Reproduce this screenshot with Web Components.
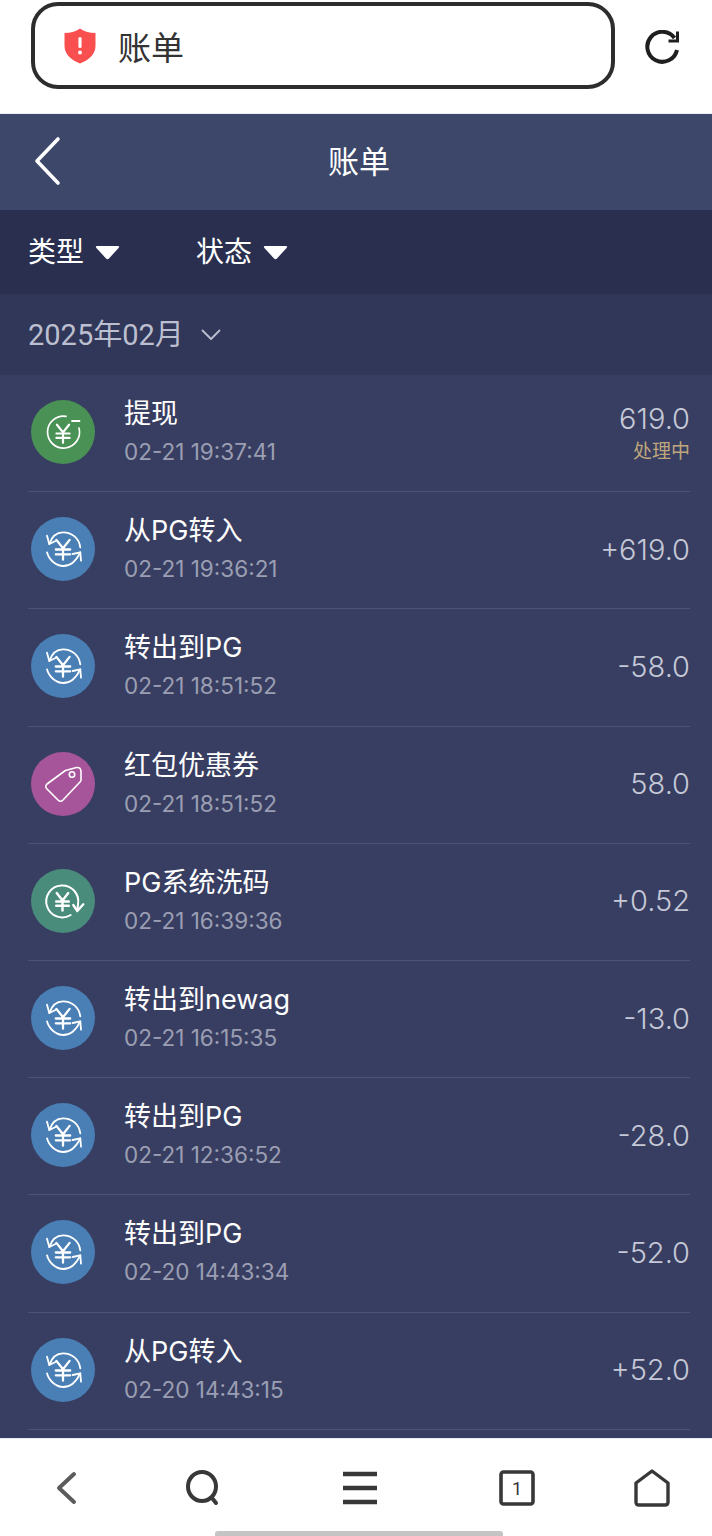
<!DOCTYPE html>
<html lang="zh">
<head>
<meta charset="utf-8">
<title>账单</title>
<style>
    html,body{margin:0;padding:0;background:#fff}
    body{font-family:Roboto,"Noto Sans CJK SC",sans-serif}
    bill-page{height:1536px}
</style>
</head>
<body>
<bill-page>
    <browser-bar slot="top">账单</browser-bar>
    <app-header slot="top">账单</app-header>
    <filter-bar slot="top">
        <filter-item>类型</filter-item>
        <filter-item>状态</filter-item>
    </filter-bar>
    <month-bar slot="top">2025年02月</month-bar>

    <bill-row icon="withdraw"><span>提现</span><span slot="time">02-21 19:37:41</span><span slot="amount">619.0</span><span slot="status">处理中</span></bill-row>
    <bill-row icon="transfer"><span>从PG转入</span><span slot="time">02-21 19:36:21</span><span slot="amount">+619.0</span></bill-row>
    <bill-row icon="transfer"><span>转出到PG</span><span slot="time">02-21 18:51:52</span><span slot="amount">-58.0</span></bill-row>
    <bill-row icon="coupon"><span>红包优惠券</span><span slot="time">02-21 18:51:52</span><span slot="amount">58.0</span></bill-row>
    <bill-row icon="rebate"><span>PG系统洗码</span><span slot="time">02-21 16:39:36</span><span slot="amount">+0.52</span></bill-row>
    <bill-row icon="transfer"><span>转出到newag</span><span slot="time">02-21 16:15:35</span><span slot="amount">-13.0</span></bill-row>
    <bill-row icon="transfer"><span>转出到PG</span><span slot="time">02-21 12:36:52</span><span slot="amount">-28.0</span></bill-row>
    <bill-row icon="transfer"><span>转出到PG</span><span slot="time">02-20 14:43:34</span><span slot="amount">-52.0</span></bill-row>
    <bill-row icon="transfer"><span>从PG转入</span><span slot="time">02-20 14:43:15</span><span slot="amount">+52.0</span></bill-row>

    <browser-nav slot="bottom"></browser-nav>
</bill-page>

<script>
const YEN = (x, y, s, w) => `<g transform="translate(${x} ${y}) scale(${s})" fill="none" stroke="#fff" stroke-width="${w}" stroke-linecap="round" stroke-linejoin="round">
    <path d="M-5.5 -8 L0 -1 L5.5 -8 M0 -1 V8.5 M-6 0 H6 M-6 4 H6"/>
</g>`

const ICONS = {
    withdraw: {bg:'#4a9155', svg:`
        <path d="M25 6.3 A16 16 0 1 0 38 18" fill="none" stroke="#fff" stroke-width="1.7" stroke-linecap="round"/>
        <path d="M31 11 H38.5" stroke="#fff" stroke-width="1.8" stroke-linecap="round"/>
        ${YEN(22,23.5,1.1,2)}`},
    transfer: {bg:'#4a7fb5', svg:`
        <path d="M8.3 17 C11 9 16 5.3 22 5.3 C31 5.3 38 11 39.3 20.3" fill="none" stroke="#fff" stroke-width="1.8" stroke-linecap="round"/>
        <path d="M6 25.3 C8 33 15 39 22.5 39 C29 39 35 34 39.3 25.3" fill="none" stroke="#fff" stroke-width="1.8" stroke-linecap="round"/>
        <path d="M6 8.7 L8.3 17 L15 13.7" fill="none" stroke="#fff" stroke-width="1.8" stroke-linecap="round" stroke-linejoin="round"/>
        <path d="M31.7 27 L39.3 25.3 L40 33.7" fill="none" stroke="#fff" stroke-width="1.8" stroke-linecap="round" stroke-linejoin="round"/>
        ${YEN(22,22.5,1.2,1.9)}`},
    coupon: {bg:'#a6559b', svg:`
        <path d="M24.5 8.5 L35.5 5.5 Q39.5 5 40 9 L40 18 Q40 19 39 20 L22 38 Q19.5 40.5 17 38 L6 27 Q3.5 24.5 6 22 L23 9.5 Q23.6 8.9 24.5 8.5 Z" fill="none" stroke="#fff" stroke-width="1.6" stroke-linejoin="round"/>
        <circle cx="31" cy="12.5" r="2.7" fill="none" stroke="#fff" stroke-width="1.6"/>`},
    rebate: {bg:'#4a8c7c', svg:`
        <path d="M29.7 36 A16 16 0 1 1 37 25.3 L36.3 31.3" fill="none" stroke="#fff" stroke-width="2" stroke-linecap="round" stroke-linejoin="round"/>
        <path d="M32.3 26 L36.3 32 L42.3 25.3" fill="none" stroke="#fff" stroke-width="2.4" stroke-linecap="round" stroke-linejoin="round"/>
        ${YEN(21.5,22.5,1.05,2.3)}`}
}

class BillPage extends HTMLElement{
    constructor(){
        super()
        this.attachShadow({mode:"open"})
        this.shadowRoot.innerHTML = `
        <style>
            :host{display:flex;flex-direction:column;overflow:hidden;width:712px}
            #list{
                flex:1;
                min-height:0;
                overflow:hidden;
                background:#383e61;
                padding:0 22px 0 28px;
            }
        </style>
        <slot name="top"></slot>
        <div id="list"><slot></slot></div>
        <slot name="bottom"></slot>
        `
    }
}
customElements.define('bill-page', BillPage)

class BrowserBar extends HTMLElement{
    constructor(){
        super()
        this.attachShadow({mode:"open"})
        this.shadowRoot.innerHTML = `
        <style>
            :host{
                display:flex;
                align-items:center;
                box-sizing:border-box;
                height:114px;
                padding:2px 32px 24px 31px;
                background:#fff;
                border-bottom:1px solid #eef0f4;
            }
            #box{
                flex:1;
                box-sizing:border-box;
                height:87px;
                border:4px solid #2d2d2d;
                border-radius:27px;
                display:flex;
                align-items:center;
                padding-left:29px;
                gap:22px;
                font-size:33px;
                color:#333;
            }
            #box svg{display:block}
            #reload{margin:4px 0 0 29px;display:block}
        </style>
        <div id="box">
            <svg width="32" height="36" viewBox="0 0 32 36">
                <path d="M16 .5 C20 3.5 26 5 31.5 5 V18 C31.5 26 25 32 16 35.5 C7 32 .5 26 .5 18 V5 C6 5 12 3.5 16 .5Z" fill="#f94f4f"/>
                <rect x="14.4" y="9" width="3.2" height="11" rx="1.5" fill="#fff"/>
                <circle cx="16" cy="24.6" r="2" fill="#fff"/>
            </svg>
            <span><slot></slot></span>
        </div>
        <svg id="reload" width="36" height="36" viewBox="0 0 36 36" fill="none" stroke="#1f1f1f" stroke-width="4">
            <path d="M30.5 8 A15 15 0 1 0 33 20"/>
            <path d="M33.5 1.5 V11 H24.5" stroke-width="3"/>
        </svg>
        `
    }
}
customElements.define('browser-bar', BrowserBar)

class AppHeader extends HTMLElement{
    constructor(){
        super()
        this.attachShadow({mode:"open"})
        this.shadowRoot.innerHTML = `
        <style>
            :host{
                display:grid;
                grid-template-columns:1fr auto 1fr;
                align-items:center;
                box-sizing:border-box;
                height:96px;
                background:#3c4769;
                color:#fff;
                font-size:31px;
            }
            svg{display:block;margin:-2px 0 0 34px}
            #title{margin:-5px 0 0 6px}
        </style>
        <svg width="28" height="50" viewBox="0 0 28 50" fill="none" stroke="#fff" stroke-width="3.6" stroke-linecap="round" stroke-linejoin="round">
            <path d="M24 3 L3 25 L24 47"/>
        </svg>
        <div id="title"><slot></slot></div>
        <div></div>
        `
    }
}
customElements.define('app-header', AppHeader)

class FilterBar extends HTMLElement{
    constructor(){
        super()
        this.attachShadow({mode:"open"})
        this.shadowRoot.innerHTML = `
        <style>
            :host{
                display:flex;
                align-items:center;
                gap:76px;
                box-sizing:border-box;
                height:84px;
                padding:0 28px;
                background:#2a2f4f;
            }
        </style>
        <slot></slot>
        `
    }
}
customElements.define('filter-bar', FilterBar)

class FilterItem extends HTMLElement{
    constructor(){
        super()
        this.attachShadow({mode:"open"})
        this.shadowRoot.innerHTML = `
        <style>
            :host{
                display:flex;
                align-items:center;
                gap:11px;
                color:#fff;
                font-size:28px;
            }
            span{margin-top:-4px}
            svg{display:block;margin-top:1px}
        </style>
        <span><slot></slot></span>
        <svg width="25" height="15" viewBox="0 0 25 15"><path d="M2 1 H23 Q25 1 23.6 3 L14 13.4 Q12.5 15 11 13.4 L1.4 3 Q0 1 2 1Z" fill="#fff"/></svg>
        `
    }
}
customElements.define('filter-item', FilterItem)

class MonthBar extends HTMLElement{
    constructor(){
        super()
        this.attachShadow({mode:"open"})
        this.shadowRoot.innerHTML = `
        <style>
            :host{
                display:flex;
                align-items:center;
                gap:17px;
                box-sizing:border-box;
                height:81px;
                padding:0 28px;
                background:#303759;
                color:#bcbfcf;
                font-size:29px;
            }
            span{margin-top:-6px}
            svg{display:block}
        </style>
        <span><slot></slot></span>
        <svg width="20" height="12" viewBox="0 0 20 12" fill="none" stroke="#bcbfcf" stroke-width="1.8" stroke-linecap="round" stroke-linejoin="round"><path d="M1.5 1.5 L10 10 L18.5 1.5"/></svg>
        `
    }
}
customElements.define('month-bar', MonthBar)

class BillRow extends HTMLElement{
    constructor(){
        super()
        this.attachShadow({mode:"open"})
        const icon = ICONS[this.getAttribute('icon')]
        const hasStatus = this.querySelector('[slot=status]')
        this.shadowRoot.innerHTML = `
        <style>
            :host{
                display:flex;
                align-items:center;
                box-sizing:border-box;
                height:117.2px;
                border-bottom:1.6px solid #4b5478;
                font-family:Inter,"Noto Sans CJK SC",sans-serif;
            }
            #icon{
                flex:none;
                width:64px;
                height:64px;
                border-radius:50%;
                margin:0 0 2px 3px;
                background:${icon.bg};
                display:flex;
                align-items:center;
                justify-content:center;
            }
            #icon svg{display:block}
            #text{
                flex:1;
                margin-left:29px;
                display:flex;
                flex-direction:column;
                gap:3px;
                margin-top:-1px;
            }
            #name{color:#fff;font-size:27px;line-height:36px}
            #time{color:#9b9eb3;font-size:22.5px;line-height:34px}
            #right{
                display:flex;
                flex-direction:column;
                align-items:flex-end;
                color:#c5c8d6;
                font-size:29px;
                font-weight:300;
                line-height:34px;
                margin-top:${hasStatus ? '-3px' : '-1px'};
            }
            #status{
                display:${hasStatus ? 'block' : 'none'};
                color:#bfa67c;
                font-size:19px;
                font-weight:400;
                line-height:24px;
                margin-top:2px;
                font-family:"Noto Sans CJK SC",sans-serif;
            }
        </style>
        <div id="icon"><svg width="44" height="44" viewBox="0 0 44 44">${icon.svg}</svg></div>
        <div id="text">
            <div id="name"><slot></slot></div>
            <div id="time"><slot name="time"></slot></div>
        </div>
        <div id="right">
            <div><slot name="amount"></slot></div>
            <div id="status"><slot name="status"></slot></div>
        </div>
        `
    }
}
customElements.define('bill-row', BillRow)

class BrowserNav extends HTMLElement{
    constructor(){
        super()
        this.attachShadow({mode:"open"})
        this.shadowRoot.innerHTML = `
        <style>
            :host{
                display:block;
                height:98px;
                background:#fff;
                border-top:1px solid #e8ebf1;
                box-sizing:border-box;
                position:relative;
            }
            #icons{
                display:flex;
                align-items:center;
                padding:30px 0 0 56px;
            }
            svg{display:block}
            #handle{
                position:absolute;
                left:215px;
                bottom:0;
                width:288px;
                height:5px;
                border-radius:3px 3px 0 0;
                background:#c4c4c4;
            }
            #tabs{position:relative;width:36px;height:36px;margin-left:121px}
            #tabs span{
                position:absolute;
                inset:0;
                display:flex;
                align-items:center;
                justify-content:center;
                font-size:18px;
                color:#333;
            }
        </style>
        <div id="icons">
            <svg width="21" height="36" viewBox="0 0 21 36" fill="none" stroke="#5c5c5c" stroke-width="4" stroke-linecap="round" stroke-linejoin="round"><path d="M18 4 L3 18 L18 32"/></svg>
            <svg style="margin-left:108px" width="36" height="36" viewBox="0 0 36 36" fill="none" stroke="#383838" stroke-width="4" stroke-linecap="round"><ellipse cx="17" cy="16.5" rx="14" ry="14.5"/><path d="M27 28 L31 33"/></svg>
            <svg style="margin-left:121px" width="36" height="34" viewBox="0 0 36 34" fill="none" stroke="#383838" stroke-width="4.4"><path d="M1 3 H35 M1 17 H35 M1 31 H35"/></svg>
            <div id="tabs">
                <svg width="36" height="36" viewBox="0 0 36 36" fill="none" stroke="#383838" stroke-width="3.6" stroke-linejoin="round"><rect x="2" y="2" width="32" height="32" rx="2.5"/></svg>
                <span>1</span>
            </div>
            <svg style="margin-left:99px" width="36" height="38" viewBox="0 0 36 38" fill="none" stroke="#383838" stroke-width="3.4" stroke-linejoin="round"><path d="M18 2 L34 14 V33 Q34 36 31 36 H5 Q2 36 2 33 V14 Z"/></svg>
        </div>
        <div id="handle"></div>
        `
    }
}
customElements.define('browser-nav', BrowserNav)
</script>
</body>
</html>
